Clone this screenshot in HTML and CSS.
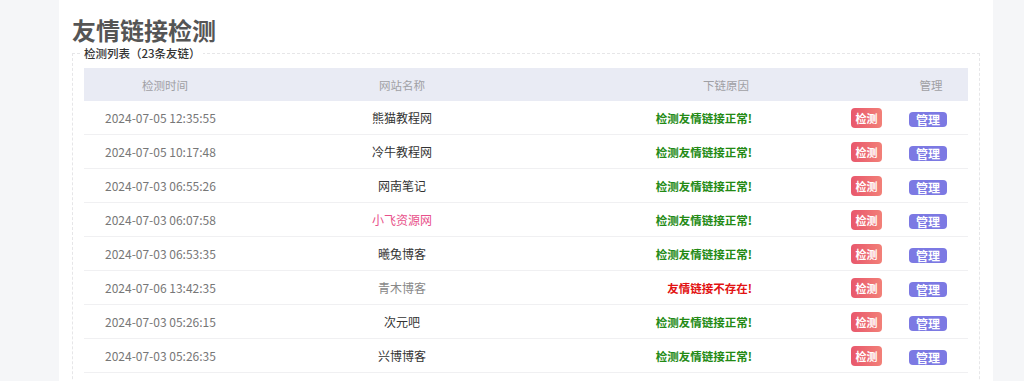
FILE: index.html
```html
<!DOCTYPE html>
<html lang="zh-CN">
<head>
<meta charset="utf-8">
<title>友情链接检测</title>
<link rel="stylesheet" href="styles.css">
</head>
<body>
<div class="page">
  <div class="side side-left"></div>
  <main class="card">
    <h1 class="title">友情链接检测</h1>
    <fieldset class="box">
      <legend class="legend">检测列表（23条友链）</legend>
      <table class="list">
        <colgroup>
          <col class="c-time"><col class="c-name"><col class="c-reason"><col class="c-check"><col class="c-manage">
        </colgroup>
        <thead>
          <tr>
            <th>检测时间</th>
            <th>网站名称</th>
            <th colspan="2">下链原因</th>
            <th>管理</th>
          </tr>
        </thead>
        <tbody>
          <tr>
            <td class="time">2024-07-05 12:35:55</td>
            <td class="name">熊猫教程网</td>
            <td class="reason ok">检测友情链接正常!</td>
            <td class="check"><span class="btn btn-check">检测</span></td>
            <td class="manage"><span class="btn btn-manage">管理</span></td>
          </tr>
          <tr>
            <td class="time">2024-07-05 10:17:48</td>
            <td class="name">冷牛教程网</td>
            <td class="reason ok">检测友情链接正常!</td>
            <td class="check"><span class="btn btn-check">检测</span></td>
            <td class="manage"><span class="btn btn-manage">管理</span></td>
          </tr>
          <tr>
            <td class="time">2024-07-03 06:55:26</td>
            <td class="name">网南笔记</td>
            <td class="reason ok">检测友情链接正常!</td>
            <td class="check"><span class="btn btn-check">检测</span></td>
            <td class="manage"><span class="btn btn-manage">管理</span></td>
          </tr>
          <tr>
            <td class="time">2024-07-03 06:07:58</td>
            <td class="name pink">小飞资源网</td>
            <td class="reason ok">检测友情链接正常!</td>
            <td class="check"><span class="btn btn-check">检测</span></td>
            <td class="manage"><span class="btn btn-manage">管理</span></td>
          </tr>
          <tr>
            <td class="time">2024-07-03 06:53:35</td>
            <td class="name">曦兔博客</td>
            <td class="reason ok">检测友情链接正常!</td>
            <td class="check"><span class="btn btn-check">检测</span></td>
            <td class="manage"><span class="btn btn-manage">管理</span></td>
          </tr>
          <tr>
            <td class="time">2024-07-06 13:42:35</td>
            <td class="name muted">青木博客</td>
            <td class="reason bad">友情链接不存在!</td>
            <td class="check"><span class="btn btn-check">检测</span></td>
            <td class="manage"><span class="btn btn-manage">管理</span></td>
          </tr>
          <tr>
            <td class="time">2024-07-03 05:26:15</td>
            <td class="name">次元吧</td>
            <td class="reason ok">检测友情链接正常!</td>
            <td class="check"><span class="btn btn-check">检测</span></td>
            <td class="manage"><span class="btn btn-manage">管理</span></td>
          </tr>
          <tr>
            <td class="time">2024-07-03 05:26:35</td>
            <td class="name">兴博博客</td>
            <td class="reason ok">检测友情链接正常!</td>
            <td class="check"><span class="btn btn-check">检测</span></td>
            <td class="manage"><span class="btn btn-manage">管理</span></td>
          </tr>
        </tbody>
      </table>
    </fieldset>
  </main>
  <div class="side side-right"></div>
</div>
</body>
</html>
```
FILE: styles.css
```css
html, body {
  margin: 0;
  padding: 0;
  background: #f5f6f8;
  font-family: "Noto Sans CJK SC", "Noto Sans", sans-serif;
  overflow: hidden;
}
.page {
  display: flex;
  height: 381px;
  overflow: hidden;
}
.side-left { width: 59px; flex: none; }
.side-right { flex: 1; }
.card {
  width: 934px;
  flex: none;
  background: #ffffff;
  padding: 14px 13px 0 13px;
  box-sizing: border-box;
}
.title {
  margin: 0;
  font-size: 24px;
  line-height: 32px;
  font-weight: 700;
  color: #555555;
}
.box {
  margin: 0;
  border: 1px dashed #e6e6e8;
  padding: 8px 11px 40px 11px;
  width: 908px;
  box-sizing: border-box;
}
.legend {
  font-size: 11.5px;
  color: #333333;
  font-weight: 500;
  padding: 0 2px;
  margin-left: -2px;
  line-height: 14px;
}
.list {
  width: 884px;
  border-collapse: collapse;
  table-layout: fixed;
}
.c-time { width: 162px; }
.c-name { width: 312px; }
.c-reason { width: 194px; }
.c-check { width: 142px; }
.c-manage { width: 74px; }
.list th {
  height: 33px;
  background: #e9ebf4;
  color: #a0a0a4;
  font-weight: 400;
  font-size: 11.5px;
  text-align: center;
  padding: 0;
}
.list td {
  height: 33px;
  border-bottom: 1px solid #f0f0f2;
  font-size: 12px;
  padding: 0;
  text-align: center;
}
.list td.time { color: #777777; text-align: left; padding-left: 21px; }
.list td.name { color: #333333; }
.list td.name.pink { color: #e8508a; }
.list td.name.muted { color: #888888; }
.list td.reason { text-align: right; font-weight: 700; font-size: 11.5px; }
.list td.reason.ok { color: #238a14; }
.list td.reason.bad { color: #e21212; }
.list td.check { text-align: right; padding-right: 12px; }
.list td.manage { text-align: left; padding-left: 15px; }
.btn {
  display: inline-block;
  color: #ffffff;
  font-weight: 700;
  vertical-align: middle;
  border-radius: 4px;
}
.btn-check {
  font-size: 11px;
  line-height: 20px;
  padding: 0 4.5px;
  background: linear-gradient(90deg, #e8576c, #f28078);
}
.btn-manage {
  font-size: 12px;
  line-height: 15px;
  padding: 0 7px;
  background: #7c79e3;
}
```
